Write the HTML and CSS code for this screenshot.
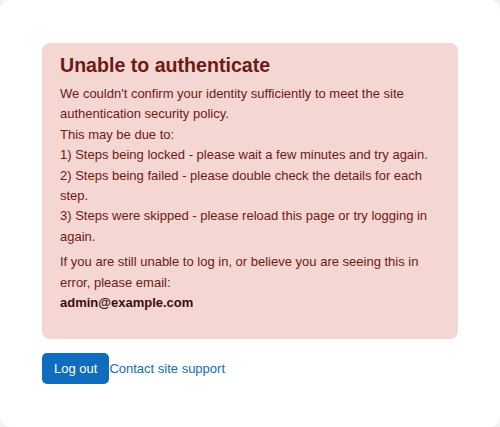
FILE: index.html
```html
<!DOCTYPE html>
<html lang="en">
<head>
  <meta charset="UTF-8" />
  <meta name="viewport" content="width=device-width, initial-scale=1" />
  <title>Unable to authenticate</title>
  <link rel="stylesheet" href="styles.css">
</head>
<body>
  <div class="page-card">
    <!-- error message -->
    <div class="alert-box" role="alert">
      <h2 class="alert-title">Unable to authenticate</h2>
      <p>We couldn't confirm your identity sufficiently to meet the site authentication security policy.<br>
        This may be due to:<br>
        1) Steps being locked - please wait a few minutes and try again.<br>
        2) Steps being failed - please double check the details for each step.<br>
        3) Steps were skipped - please reload this page or try logging in again.</p>
      <p>If you are still unable to log in, or believe you are seeing this in error, please email:<br>
        <strong>admin@example.com</strong></p>
    </div>

    <!-- actions -->
    <div class="actions">
      <button class="btn-logout" type="button">Log out</button>
      <a class="support-link" href="#">Contact site support</a>
    </div>
  </div>
</body>
</html>
```

FILE: styles.css
```css
* {
  box-sizing: border-box;
}
html, body {
  height: 100%;
}
body {
  margin: 0;
  background-color: #f2f2f2;
  font-family: "Liberation Sans", Arial, sans-serif;
  font-size: 13px;
  color: #1d2125;
}

/* white page */
.page-card {
  min-height: 100%;
  background: #fff;
  border-radius: 10px;
  padding: 43px 42px 20px;
}

/* error box */
.alert-box {
  background-color: #f4d6d3;
  color: #6e1a15;
  border-radius: 8px;
  padding: 10px 18px 21px;
}
.alert-title {
  margin: 0 0 7px;
  font-size: 19.6px;
  font-weight: 700;
  line-height: 24px;
}
.alert-box p {
  margin: 0 0 5px;
  line-height: 20.4px;
}
.alert-box strong {
  color: #3b0d0a;
}

/* buttons */
.actions {
  display: flex;
  align-items: center;
  margin-top: 14px;
}
.btn-logout {
  background-color: #0f6cbf;
  color: #fff;
  border: none;
  border-radius: 5px;
  font-family: inherit;
  font-size: 13px;
  height: 31px;
  padding: 0 12px;
  cursor: pointer;
}
.support-link {
  color: #0f6cbf;
  text-decoration: none;
  line-height: 20px;
}
```
